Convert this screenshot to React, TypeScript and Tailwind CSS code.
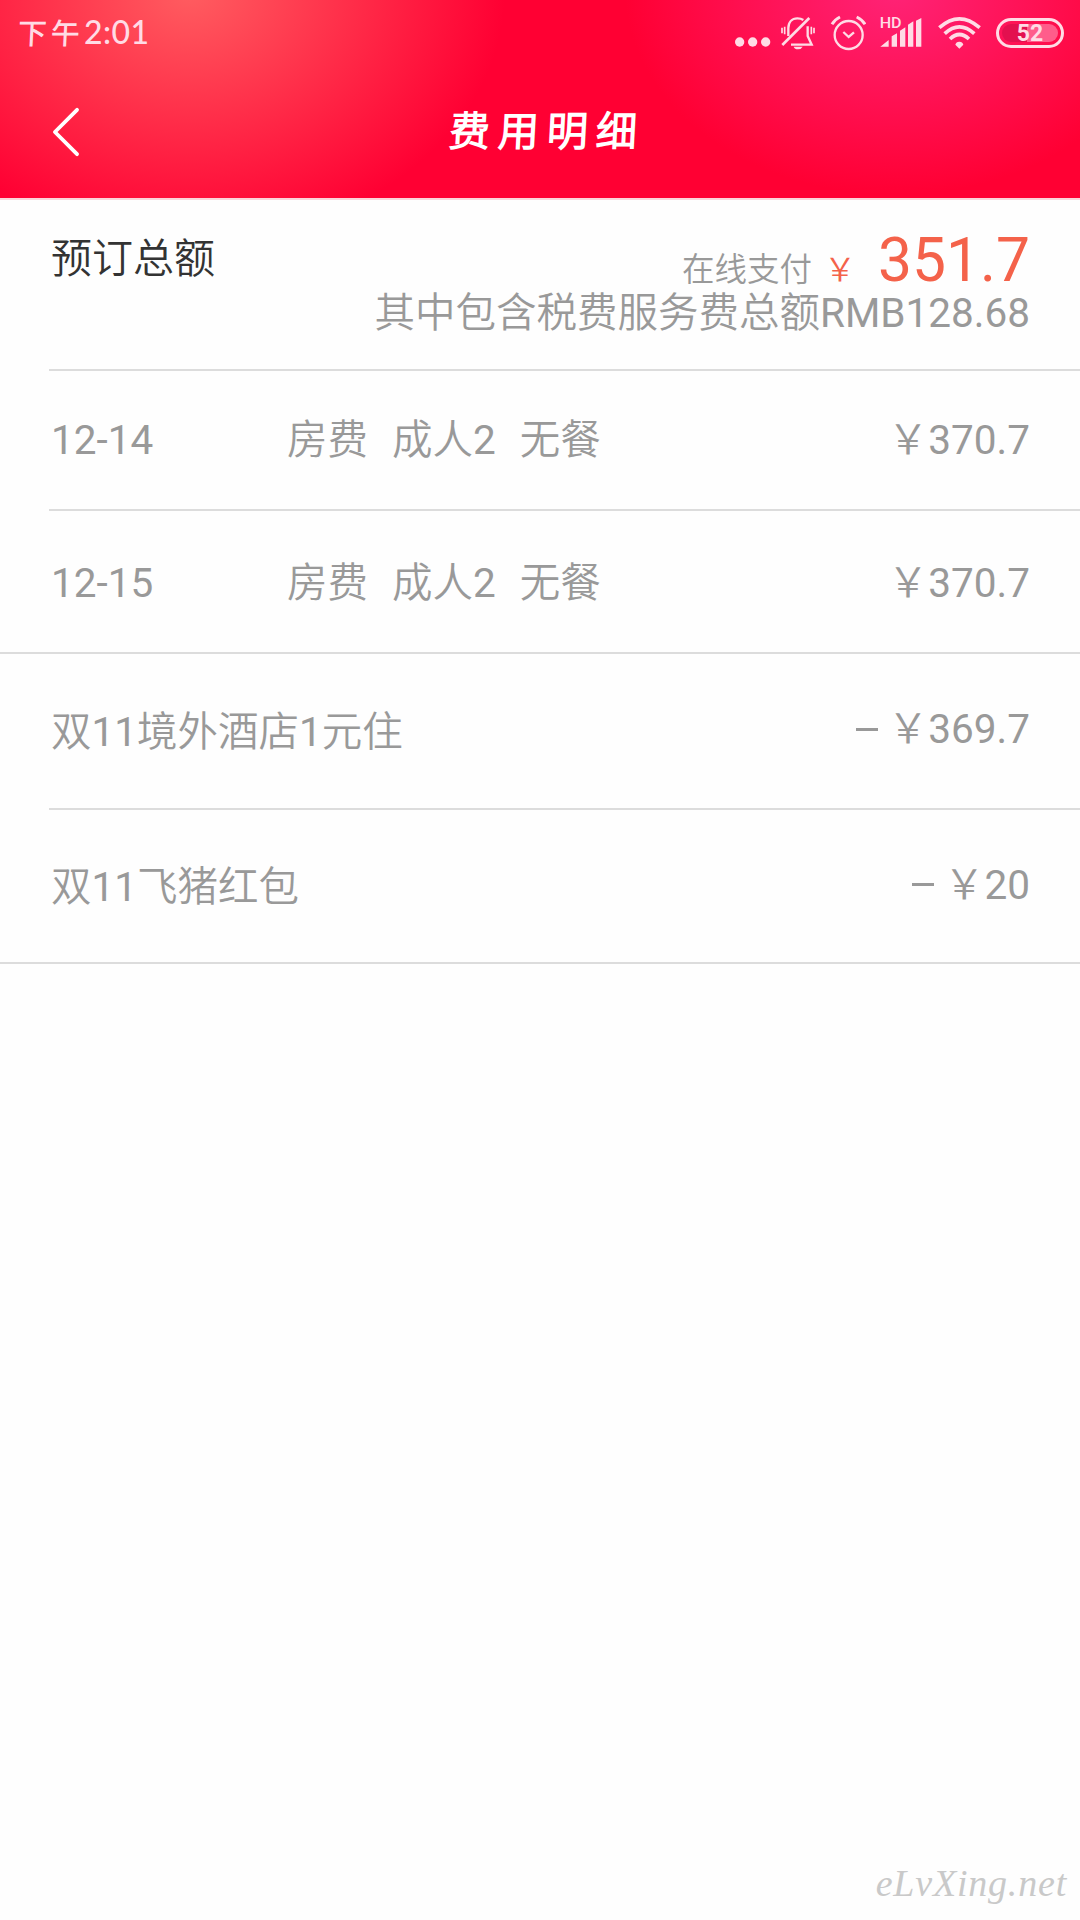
import type { ReactNode } from 'react';

const rooms = [
  { date: '12-14', parts: ['房费', '成人2', '无餐'], price: '370.7' },
  { date: '12-15', parts: ['房费', '成人2', '无餐'], price: '370.7' },
];

const discounts = [
  { name: '双11境外酒店1元住', price: '369.7' },
  { name: '双11飞猪红包', price: '20' },
];

export default function App() {
  return (
    <div className="flex h-[1920px] w-[1080px] flex-col bg-[#fefefe] font-['Roboto','Noto_Sans_CJK_SC_DemiLight','Noto_Sans_CJK_SC',sans-serif] text-[40.5px] leading-[48px] text-[#999]">
      <header className="flex h-[200px] flex-col border-b-2 border-[#fbd5da] bg-[radial-gradient(ellipse_315px_250px_at_190px_-8px,#ff5d60,#ff003300),radial-gradient(ellipse_270px_205px_at_895px_-10px,#ff2377,#ff003300)] bg-[#ff0033] text-white">
        <StatusBar />
        <NavBar title="费用明细" />
      </header>

      <main>
        <section className="ml-[49px] flex h-[171px] justify-between border-b-[2px] border-[#dcdcdc] pr-[50px]">
          <span className="mt-[35px] ml-[2px] text-[41px] text-[#333]">预订总额</span>
          <div className="mt-[35px] text-right">
            <div className="flex h-[54px] items-baseline justify-end leading-none">
              <span className="text-[32.5px]">在线支付</span>
              <span className="ml-[12px] text-[32px] text-[#f4624a]">￥</span>
              <span className="ml-[22px] text-[60.5px] leading-[52px] text-[#f4624a]">351.7</span>
            </div>
            <div>其中包含税费服务费总额RMB128.68</div>
          </div>
        </section>

        {/* Nightly rates */}
        <Row inset height="h-[140px]">
          <RoomLine {...rooms[0]} />
        </Row>
        <Row height="h-[143px] pt-[2px]">
          <RoomLine {...rooms[1]} />
        </Row>

        {/* Discounts */}
        <Row inset height="h-[156px] pt-[1px]">
          <DiscountLine {...discounts[0]} />
        </Row>
        <Row height="h-[154px] pt-[2px]">
          <DiscountLine {...discounts[1]} />
        </Row>
      </main>

      <footer className="mt-auto flex justify-end pr-[13px] pb-[12px] font-['Liberation_Serif',serif] text-[38px] leading-[50px] tracking-[0.8px] text-[#c9c9c9] italic">
        eLvXing.net
      </footer>
    </div>
  );
}

function Row({ inset, height, children }: { inset?: boolean; height: string; children: ReactNode }) {
  return (
    <div className={inset ? 'pl-[49px]' : ''}>
      <div
        className={`flex items-center border-b-[2px] border-[#dcdcdc] pr-[50px] ${inset ? 'pl-[2px]' : 'pl-[51px]'} ${height}`}
      >
        {children}
      </div>
    </div>
  );
}

function RoomLine({ date, parts, price }: { date: string; parts: string[]; price: string }) {
  return (
    <>
      <span className="w-[236px]">{date}</span>
      <span className="flex flex-1 gap-[24px]">
        {parts.map((part) => (
          <span key={part}>{part}</span>
        ))}
      </span>
      <span>￥{price}</span>
    </>
  );
}

function DiscountLine({ name, price }: { name: string; price: string }) {
  return (
    <>
      <span className="flex-1">{name}</span>
      <span className="flex items-center pb-[5px]">
        <span className="mr-[10px] h-[3px] w-[22px] bg-[#999]" />
        ￥{price}
      </span>
    </>
  );
}

function NavBar({ title }: { title: string }) {
  return (
    <div className="grid flex-1 grid-cols-[1fr_auto_1fr] items-center">
      <svg className="ml-[51px] h-[50px] w-[29px]" viewBox="0 0 30 52" fill="none" stroke="#fff" strokeWidth="4" strokeLinecap="round" strokeLinejoin="round">
        <path d="M27 3 4 26l23 23" />
      </svg>
      <h1 className="-skew-x-3 pl-[13px] text-[41px] font-bold tracking-[8px]">{title}</h1>
    </div>
  );
}

function StatusBar() {
  return (
    <div className="flex h-[66px] items-center pr-[16px] pl-[18px] text-[#ffdbe5]">
      <div className="flex flex-1 items-baseline pb-[3px]">
        <span className="-skew-x-3 font-['Noto_Sans_CJK_SC',sans-serif] text-[29px] font-medium tracking-[4px]">下午</span>
        <span className="font-['Lato',sans-serif] text-[32px] font-medium tracking-[0.4px]">2:01</span>
      </div>

      {/* More notifications */}
      <svg className="mr-[9px] h-[36px] w-[36px]" viewBox="0 0 108 108" fill="currentColor">
        <circle cx="14" cy="81" r="14" />
        <circle cx="53" cy="81" r="14" />
        <circle cx="92" cy="81" r="14" />
      </svg>

      {/* Silent mode */}
      <svg className="mr-[14px] h-[36px] w-[36px]" viewBox="0 0 108 108" fill="none" stroke="currentColor" strokeWidth="7">
        <path d="M7 90 88 9" strokeWidth="8" />
        <path d="M25 63V40C25 21 36 10 52 10q11 0 18 5" />
        <path d="M83 34v29l12 26H33" />
        <path d="M14 35v23M6 38v17M94 35v23M102 38v17" strokeWidth="5" />
        <path d="M41 95h27q-4 8-14 8t-13-8Z" fill="currentColor" stroke="none" />
      </svg>

      {/* Alarm */}
      <svg className="mr-[13px] h-[36px] w-[36px]" viewBox="0 0 108 108" fill="none" stroke="currentColor" strokeWidth="7">
        <circle cx="56" cy="60" r="42" />
        <path d="m40 51 16 15 16-14" strokeWidth="7" />
        <path d="M6 28Q15 13 30 6M80 6q17 8 25 22" strokeWidth="9" />
      </svg>

      {/* Mobile signal */}
      <svg className="mr-[15px] h-[36px] w-[44px]" viewBox="0 0 132 108" fill="currentColor">
        <text x="2" y="38" fontSize="46" fontWeight="500" textLength="66" lengthAdjust="spacingAndGlyphs" fontFamily="Roboto">
          HD
        </text>
        <path d="m4 95 25-20v20ZM38 64l16-9v40H38ZM63 47l16-10v58H63ZM87 29l16-10v76H87ZM111 17l16-8v86h-16Z" />
      </svg>

      {/* Wi-Fi */}
      <svg className="mr-[15px] h-[36px] w-[43px]" viewBox="0 0 129 108" fill="none" stroke="currentColor" strokeWidth="11">
        <path d="M4 38q60-53 121 0M20 56q44-41 89 0M36 72q28-27 57 0" />
        <path d="M64 80a12 12 0 0 1 12 9L64 101 52 89a12 12 0 0 1 12-9Z" fill="currentColor" stroke="none" />
      </svg>

      {/* Battery */}
      <div className="flex h-[30px] w-[68px] rounded-full border-[3px] border-current p-[3px]">
        <div className="flex flex-1 items-center justify-center rounded-full bg-[linear-gradient(90deg,#e3104f_45%,#ff5d8b_45%)] text-[23px] leading-none font-bold">
          52
        </div>
      </div>
    </div>
  );
}
